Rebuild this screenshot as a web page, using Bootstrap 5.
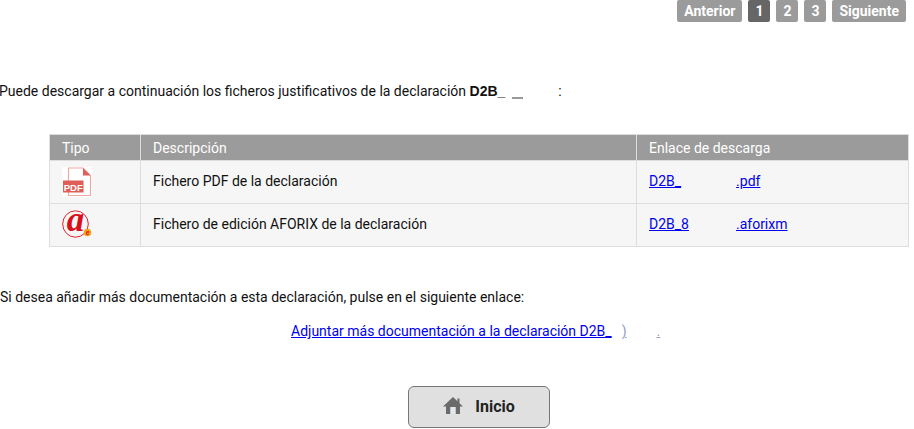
<!DOCTYPE html>
<html lang="es">
<head>
<meta charset="utf-8">
<title>Documentos</title>
<link rel="stylesheet" href="https://cdn.jsdelivr.net/npm/bootstrap@5.3.0/dist/css/bootstrap.min.css">
<style>
html,body{height:429px;overflow:hidden}
body{font-family:Roboto,"Liberation Sans",sans-serif;font-size:14px;line-height:16px;color:#111;background:#fff;padding:0 8px 0 0}
.pager-row{height:22px;gap:6px}
.pg-btn{background:#9b9b9b;color:#fff;font-weight:700;font-size:14px;line-height:22px;padding:0 7px;border-radius:2px;text-decoration:none}
.pg-btn.on{background:#666}
.pg-num{width:22px;padding:0;text-align:center}
.intro{margin:61px 0 0 -1px;height:16px;white-space:nowrap}
.intro b{font-family:"Liberation Sans",sans-serif;font-size:14px}
.gap-a{display:inline-block;width:53px;padding-left:7px}
.smudge{display:inline-block;width:11px;height:2px;background:#999;vertical-align:-3px}
.doc-table{margin:35px 0 0 49px;width:860px;border-collapse:collapse;table-layout:fixed}
.doc-table th,.doc-table td{border:1px solid #ddd;padding:0 12px;vertical-align:middle}
.doc-table th{background:#9b9b9b;color:#fff;font-weight:400;height:26px}
.doc-table td{background:#f6f6f6;height:43px;padding-bottom:2px}
.doc-table th:nth-child(n+2){border-left-color:#fff}
.doc-table td.ic{padding:0 0 0 12px}
.doc-table svg{overflow:visible}
a.dl{color:#00e;text-decoration:underline}
a.dl.faint{color:#99c}
.hole{display:inline-block}
.more{margin:42px 0 0;height:16px}
.attach{margin:18px 0 0 291px;height:16px;white-space:nowrap}
.home-wrap{margin-top:47px;padding-left:408px}
.home-btn{width:142px;height:42px;background:#e0e0e0;border:1px solid #777;border-radius:6px;color:#222;font-weight:700;font-size:16px;gap:12px;padding:0}
.home-btn svg{margin-bottom:4px}
.home-btn:hover{background:#e0e0e0;color:#222;border-color:#777}
</style>
</head>
<body>
<div class="d-flex justify-content-end pager-row">
  <a class="pg-btn" href="#">Anterior</a>
  <a class="pg-btn pg-num on" href="#">1</a>
  <a class="pg-btn pg-num" href="#">2</a>
  <a class="pg-btn pg-num" href="#">3</a>
  <a class="pg-btn" href="#">Siguiente</a>
</div>
<p class="intro">Puede descargar a continuación los ficheros justificativos de la declaración <b>D2B_</b><span class="gap-a"><span class="smudge"></span></span>:</p>
<table class="doc-table">
  <colgroup><col style="width:91px"><col style="width:496px"><col></colgroup>
  <thead><tr><th>Tipo</th><th>Descripción</th><th>Enlace de descarga</th></tr></thead>
  <tbody>
    <tr>
      <td class="ic">
        <svg width="30" height="30" viewBox="0 0 30 30" class="d-block" aria-hidden="true">
          <rect x="0.500" y="0" width="29.500" height="30" fill="#fff"/>
          <path d="M6.500 1H21l7.500 7.500V28.500H6.500Z" fill="#fff" stroke="#eba9a4" stroke-width="1.200"/>
          <path d="M21 1v7.500h7.500Z" fill="#de5f58"/>
          <rect x="1" y="13.500" width="20.500" height="12" fill="#de5f58"/>
          <text x="11.200" y="23.500" text-anchor="middle" font-family="Liberation Sans,sans-serif" font-size="9.500" font-weight="700" fill="#fff">PDF</text>
        </svg>
      </td>
      <td>Fichero PDF de la declaración</td>
      <td><a class="dl" href="#">D2B_</a><span class="hole" style="width:55px"></span><a class="dl" href="#">.pdf</a></td>
    </tr>
    <tr>
      <td class="ic">
        <svg width="30" height="40" viewBox="0 -5.500 30 40" class="d-block" aria-hidden="true">
          <ellipse cx="13.500" cy="13.500" rx="12.800" ry="13.200" fill="none" stroke="#e8212a" stroke-width="1"/>
          <text x="13.500" y="20" text-anchor="middle" font-family="Liberation Serif,serif" font-style="italic" font-weight="700" font-size="35" fill="#d9101c">a</text>
          <circle cx="25.500" cy="22" r="3.800" fill="#f7a21b"/>
          <text x="25.500" y="24" text-anchor="middle" font-family="Liberation Sans,sans-serif" font-style="italic" font-weight="700" font-size="6.500" fill="#d9101c">e</text>
        </svg>
      </td>
      <td>Fichero de edición AFORIX de la declaración</td>
      <td><a class="dl" href="#">D2B_8</a><span class="hole" style="width:47px"></span><a class="dl" href="#">.aforixm</a></td>
    </tr>
  </tbody>
</table>
<p class="more">Si desea añadir más documentación a esta declaración, pulse en el siguiente enlace:</p>
<p class="attach"><a class="dl" href="#">Adjuntar más documentación a la declaración D2B_</a><span class="hole" style="width:10px"></span><a class="dl faint" href="#">)</a><span class="hole" style="width:30px"></span><a class="dl faint" href="#">.</a></p>
<div class="home-wrap">
  <button type="button" class="btn home-btn d-inline-flex align-items-center justify-content-center">
    <svg width="20" height="17" viewBox="0 0 20 17" aria-hidden="true"><path d="M10 0 0 9.500h3V17h4.500V10h5v7H17V9.500h3l-3.500-3.300V1.500h-2v2.800Z" fill="#6b6b6b"/><rect x="7.500" y="10" width="5" height="7" fill="#e3e9f0"/></svg>
    <span>Inicio</span>
  </button>
</div>
</body>
</html>
